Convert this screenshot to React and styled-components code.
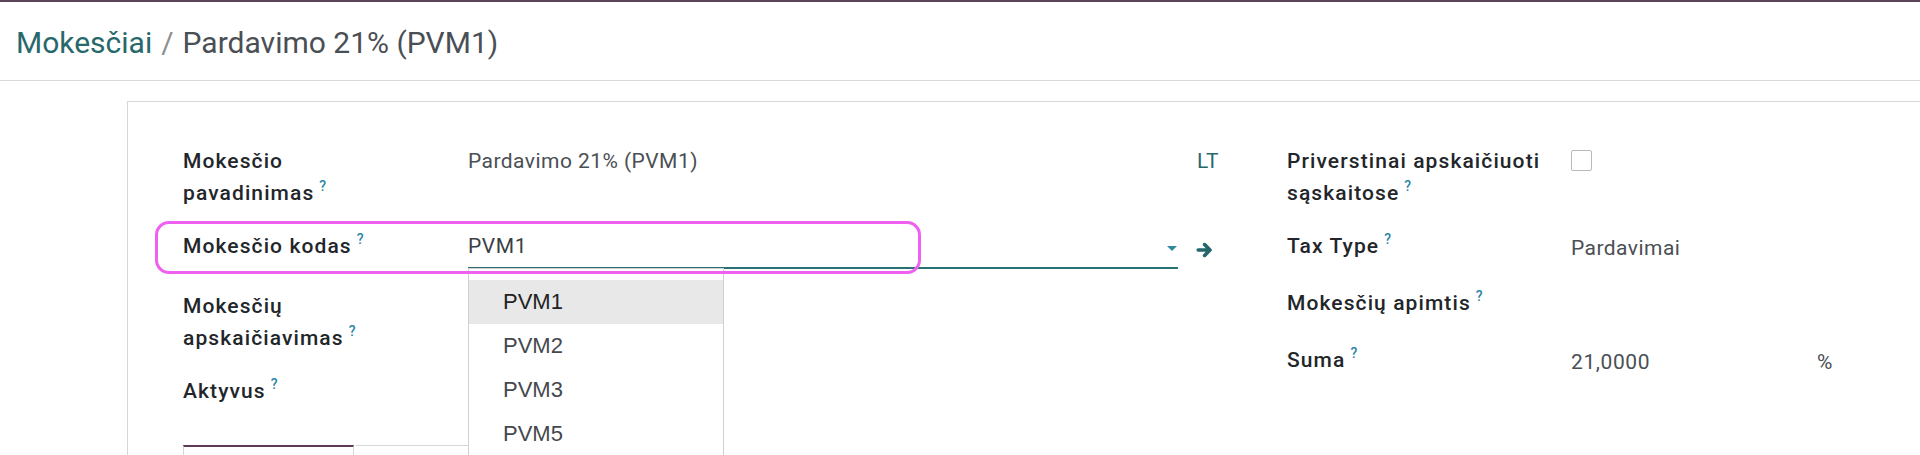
import React from "react";
import styled, { createGlobalStyle } from "styled-components";

const GlobalStyle = createGlobalStyle`
  html, body { margin: 0; padding: 0; background: #ffffff; overflow: hidden; }
  body {
    font-family: Roboto, "Noto Sans", "Liberation Sans", sans-serif;
    color: #212529;
  }
  * { box-sizing: border-box; }
`;

const Page = styled.div`
  min-height: 455px;
  display: flex;
  flex-direction: column;
`;

const TopBar = styled.div`
  height: 2px;
  background: #5c4459;
`;

const ControlPanel = styled.header`
  height: 79px;
  border-bottom: 1px solid #d8dadd;
  display: flex;
  align-items: center;
  padding: 3px 0 0 16px;
`;

const Breadcrumb = styled.div`
  font-size: 30px;
  display: flex;
  align-items: baseline;
  gap: 9px;
`;

const Crumb = styled.span`
  color: ${(p) => (p.$active ? "#4a4f55" : "#27686b")};
`;

const Sep = styled.span`
  color: #8b8f93;
`;

const Main = styled.main`
  padding-top: 20px;
`;

const Sheet = styled.section`
  position: relative;
  margin: 0 -40px 0 127px;
  border: 1px solid #d5d8db;
  border-right: none;
  border-bottom: none;
  padding: 44px 0 0 55px;
  min-height: 360px;
`;

const Groups = styled.div`
  display: flex;
  align-items: flex-start;
`;

const Group = styled.div`
  width: ${(p) => p.$width || "auto"};
  flex: ${(p) => (p.$width ? "none" : "1")};
  display: flex;
  flex-direction: column;
`;

const Row = styled.div`
  position: relative;
  display: grid;
  grid-template-columns: ${(p) => p.$cols};
  min-height: ${(p) => p.$minH || "31.5px"};
  margin-bottom: 22px;
  font-size: 21px;
  line-height: 31.5px;
`;

const Label = styled.div`
  font-weight: 500;
  color: #22262a;
  letter-spacing: 1.1px;
  white-space: nowrap;
`;

const Help = styled.sup`
  font-size: 14px;
  line-height: 0;
  letter-spacing: 0;
  color: #2a84a6;
  font-weight: 500;
  margin-left: 5px;
  position: relative;
  top: -1px;
`;

const Value = styled.div`
  color: #4a4f54;
  letter-spacing: 0.45px;
  padding-top: ${(p) => p.$pt || "0px"};
  white-space: nowrap;
`;

const Extra = styled.div`
  padding-left: ${(p) => p.$pl || "19px"};
  color: #27686b;
  letter-spacing: 0.6px;
`;

const InputWrap = styled.div`
  position: relative;
  display: flex;
  align-items: center;
  height: 38px;
  padding-bottom: 3px;
  border-bottom: 2px solid #2a7176;
  color: #3a3f44;
  letter-spacing: 0.6px;
`;

const InputText = styled.span`
  flex: 1;
  align-self: flex-start;
`;

const Caret = styled.span`
  width: 0;
  height: 0;
  border-left: 5.5px solid transparent;
  border-right: 5.5px solid transparent;
  border-top: 5.5px solid #2f8aa1;
  margin: 2px 1px 0 0;
`;

const Dropdown = styled.ul`
  position: absolute;
  top: 100%;
  left: 0;
  margin: 1px 0 0;
  width: 256px;
  list-style: none;
  padding: 11px 0 30px;
  background: #ffffff;
  border: 1px solid #d0d0d0;
  z-index: 5;
  letter-spacing: 0;
  font-family: "Liberation Sans", Arial, sans-serif;
`;

const Item = styled.li`
  height: 44px;
  line-height: 44px;
  padding-left: 34px;
  font-size: 22px;
  color: ${(p) => (p.$selected ? "#222222" : "#45484c")};
  background: ${(p) => (p.$selected ? "#e8e8e8" : "transparent")};
`;

const ArrowButton = styled.span`
  display: block;
  margin-top: 10px;
  width: 18px;
  height: 18px;
  color: #24666b;

  svg {
    display: block;
  }
`;

const Highlight = styled.div`
  position: absolute;
  left: -28px;
  top: -10px;
  width: 766px;
  height: 53px;
  border: 3px solid #ef5ff0;
  border-radius: 14px;
  pointer-events: none;
  z-index: 10;
`;

const Checkbox = styled.span`
  display: block;
  width: 21px;
  height: 21px;
  margin-top: 4px;
  border: 1px solid #b9b9b9;
  border-radius: 2px;
  background: #fff;
`;

const AmountWrap = styled.div`
  display: flex;
  padding-top: 2px;
  color: #4a4f54;
  letter-spacing: 0.6px;
`;

const Amount = styled.span`
  width: 246px;
`;

const Tabs = styled.div`
  display: flex;
  margin-top: 15px;
  gap: 2px;
`;

const Tab = styled.div`
  width: ${(p) => p.$w};
  height: 44px;
  border-top: ${(p) => (p.$active ? "2px solid #5e3a57" : "1px solid #d5d7da")};
  border-left: ${(p) => (p.$active ? "1px solid #d5d7da" : "none")};
  border-right: ${(p) => (p.$active ? "1px solid #d5d7da" : "none")};
`;

const ArrowIcon = () => (
  <svg viewBox="0 0 18 18" width="18" height="18">
    <path
      d="M2.2 9 H13.5 M8.6 3.6 L14 9 L8.6 14.4"
      fill="none"
      stroke="currentColor"
      strokeWidth="3.6"
      strokeLinecap="round"
      strokeLinejoin="round"
    />
  </svg>
);

const LEFT_COLS = "285px 710px 1fr";
const RIGHT_COLS = "284px 1fr";

export default function App() {
  return (
    <Page>
      <GlobalStyle />
      <TopBar />
      <ControlPanel>
        <Breadcrumb>
          <Crumb>Mokesčiai</Crumb>
          <Sep>/</Sep>
          <Crumb $active>Pardavimo 21% (PVM1)</Crumb>
        </Breadcrumb>
      </ControlPanel>
      <Main>
        <Sheet>
          <Groups>
            <Group $width="1104px">
              <Row $cols={LEFT_COLS}>
                <Label>
                  Mokesčio
                  <br />
                  pavadinimas<Help>?</Help>
                </Label>
                <Value>Pardavimo 21% (PVM1)</Value>
                <Extra>LT</Extra>
              </Row>
              <Row $cols={LEFT_COLS}>
                <Highlight />
                <Label>
                  Mokesčio kodas<Help>?</Help>
                </Label>
                <InputWrap>
                  <InputText>PVM1</InputText>
                  <Caret />
                  <Dropdown>
                    <Item $selected>PVM1</Item>
                    <Item>PVM2</Item>
                    <Item>PVM3</Item>
                    <Item>PVM5</Item>
                  </Dropdown>
                </InputWrap>
                <Extra $pl="18px">
                  <ArrowButton>
                    <ArrowIcon />
                  </ArrowButton>
                </Extra>
              </Row>
              <Row $cols={LEFT_COLS}>
                <Label>
                  Mokesčių
                  <br />
                  apskaičiavimas<Help>?</Help>
                </Label>
                <Value />
              </Row>
              <Row $cols={LEFT_COLS}>
                <Label>
                  Aktyvus<Help>?</Help>
                </Label>
                <Value />
              </Row>
            </Group>
            <Group>
              <Row $cols={RIGHT_COLS}>
                <Label>
                  Priverstinai apskaičiuoti
                  <br />
                  sąskaitose<Help>?</Help>
                </Label>
                <Value>
                  <Checkbox />
                </Value>
              </Row>
              <Row $cols={RIGHT_COLS} $minH="35px">
                <Label>
                  Tax Type<Help>?</Help>
                </Label>
                <Value $pt="2px">Pardavimai</Value>
              </Row>
              <Row $cols={RIGHT_COLS} $minH="35px">
                <Label>
                  Mokesčių apimtis<Help>?</Help>
                </Label>
                <Value />
              </Row>
              <Row $cols={RIGHT_COLS}>
                <Label>
                  Suma<Help>?</Help>
                </Label>
                <AmountWrap>
                  <Amount>21,0000</Amount>
                  <span>%</span>
                </AmountWrap>
              </Row>
            </Group>
          </Groups>
          <Tabs>
            <Tab $active $w="171px" />
            <Tab $w="340px" />
          </Tabs>
        </Sheet>
      </Main>
    </Page>
  );
}
